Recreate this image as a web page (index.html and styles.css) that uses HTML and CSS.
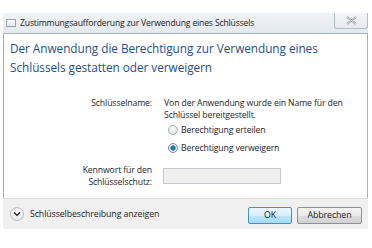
FILE: index.html
```html
<!DOCTYPE html>
<html lang="de">
<head>
<meta charset="utf-8">
<link rel="stylesheet" href="styles.css">
</head>
<body>
<div class="window">
  <div class="titlebar">
    <span class="appicon"></span>
    <span class="title">Zustimmungsaufforderung zur Verwendung eines Schlüssels</span>
    <span class="close">
      <svg width="11" height="9" viewBox="0 0 11 9"><path d="M1 1 L10 8 M10 1 L1 8" stroke="#8a939c" stroke-width="2" fill="none"/><path d="M1 1 L10 8 M10 1 L1 8" stroke="#f4f6f8" stroke-width="0.8" fill="none"/></svg>
    </span>
  </div>
  <div class="content">
    <h1 class="heading">Der Anwendung die Berechtigung zur Verwendung eines Schlüssels gestatten oder verweigern</h1>
    <div class="form">
      <div class="label">Schlüsselname:</div>
      <div class="value">
        <p class="desc">Von der Anwendung wurde ein Name für den Schlüssel bereitgestellt.</p>
        <div class="radio"><span class="dot"></span>Berechtigung erteilen</div>
        <div class="radio"><span class="dot checked"></span>Berechtigung verweigern</div>
      </div>
      <div class="label pw">Kennwort für den<br>Schlüsselschutz:</div>
      <div class="value pw"><span class="input"></span></div>
    </div>
  </div>
  <div class="footer">
    <span class="chev"><svg width="8" height="6" viewBox="0 0 8 6"><path d="M1 1.2 L4 4.4 L7 1.2" stroke="#333" stroke-width="1.5" fill="none"/></svg></span>
    <span class="more">Schlüsselbeschreibung anzeigen</span>
    <span class="btn ok">OK</span>
    <span class="btn">Abbrechen</span>
  </div>
</div>
</body>
</html>
```
FILE: styles.css
```css
html, body {
  margin: 0;
  padding: 0;
  background: #fff;
}
body {
  font-family: "Open Sans", "Noto Sans", sans-serif;
  color: #1e1e1e;
  width: 372px;
  height: 248px;
  overflow: hidden;
}
.window {
  margin: 13px 0 0 3px;
  width: 365px;
}
.titlebar {
  height: 20px;
  display: flex;
  align-items: center;
  background: linear-gradient(#f0f3f6, #e4e9ee);
  position: relative;
}
.appicon {
  width: 10px;
  height: 8px;
  margin-left: 3px;
  margin-right: 4px;
  border: 1px solid #9aa4ae;
  background: linear-gradient(#ffffff, #e4e8ec);
  box-sizing: border-box;
}
.title {
  font-size: 8.6px;
  color: #1a1a1a;
  letter-spacing: -0.15px;
  white-space: nowrap;
}
.close {
  position: absolute;
  right: 0;
  top: 0;
  width: 34px;
  height: 16px;
  box-sizing: border-box;
  border: 1px solid #b4bcc4;
  border-top: none;
  border-radius: 0 0 3px 3px;
  background: linear-gradient(#f4f6f8, #e6eaee);
  display: flex;
  align-items: center;
  justify-content: center;
}
.content {
  background: #fff;
  border: 1px solid #a9b1b9;
  border-left-color: #8fb3bf;
  border-bottom: none;
  height: 165px;
  box-sizing: border-box;
  padding: 5px 0 0 6px;
}
.heading {
  margin: 0;
  font-weight: normal;
  font-size: 11.8px;
  line-height: 19px;
  color: #1c4f96;
  letter-spacing: -0.05px;
}
.form {
  display: grid;
  grid-template-columns: 142px 1fr;
  column-gap: 12px;
  margin-top: 20px;
  font-size: 8.7px;
  letter-spacing: -0.12px;
}
.label {
  text-align: right;
  line-height: 12px;
}
.desc {
  margin: 0;
  line-height: 12px;
  width: 200px;
}
.radio {
  display: flex;
  align-items: center;
  height: 18px;
  margin-left: 4px;
}
.radio:first-of-type {
  margin-top: 0;
}
.dot {
  width: 10px;
  height: 10px;
  box-sizing: border-box;
  border-radius: 50%;
  border: 1px solid #a8aeb4;
  background: radial-gradient(circle at 40% 35%, #ffffff, #d4d8dc);
  margin-right: 3px;
}
.dot.checked {
  background: radial-gradient(circle, #1a6f9a 0, #2a86b8 2.4px, #f2f4f6 3px, #dfe3e7 100%);
  border-color: #7c8a96;
}
.label.pw {
  margin-top: 7px;
  line-height: 12px;
}
.value.pw {
  margin-top: 7px;
  align-self: center;
}
.input {
  display: block;
  width: 118px;
  height: 16px;
  margin-left: -1px;
  box-sizing: border-box;
  border: 1px solid #c4c8cc;
  background: #f0f0f0;
}
.footer {
  height: 31px;
  background: #f0f0f0;
  border-top: 1px solid #dedede;
  box-sizing: border-box;
  display: flex;
  align-items: center;
  padding: 0 6px 0 7px;
  font-size: 8.8px;
  letter-spacing: -0.1px;
}
.chev {
  width: 14px;
  height: 14px;
  box-sizing: border-box;
  border-radius: 50%;
  border: 1px solid #b8bcc0;
  background: radial-gradient(circle at 50% 35%, #ffffff, #e2e4e6);
  display: flex;
  align-items: center;
  justify-content: center;
  margin-right: 6px;
}
.more {
  flex: 1;
}
.btn {
  height: 17px;
  width: 65px;
  box-sizing: border-box;
  border: 1px solid #8c9196;
  border-radius: 2px;
  background: linear-gradient(#f4f4f4 0, #ebebeb 50%, #dcdcdc 51%, #d2d2d2 100%);
  display: flex;
  align-items: center;
  justify-content: center;
  color: #1a1a1a;
  margin-left: 5px;
  margin-top: 2px;
}
.btn.ok {
  width: 44px;
  border-color: #3c95c8;
  background: linear-gradient(#eaf6fd 0, #d9f0fc 50%, #bee6fd 51%, #a7d9f5 100%);
}
```
